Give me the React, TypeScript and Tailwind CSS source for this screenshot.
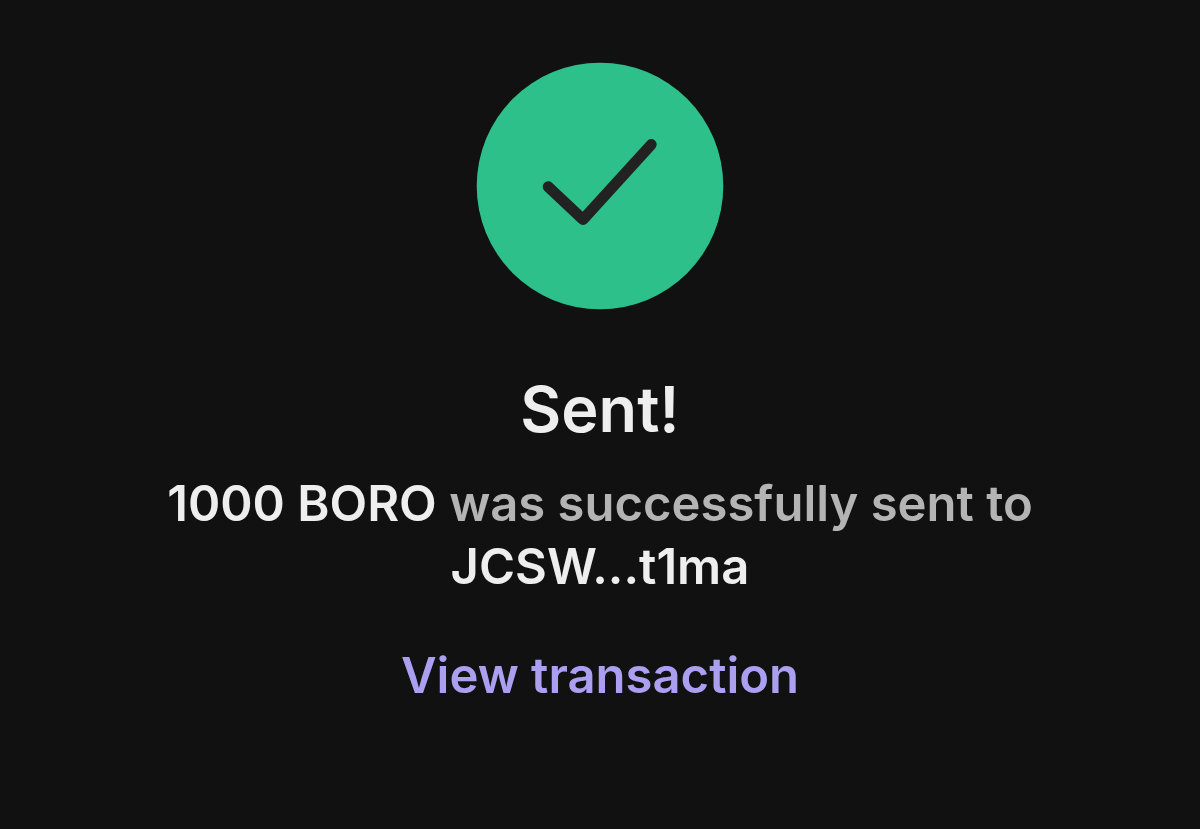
import React from 'react';

const transfer = {
  amount: '1000 BORO',
  recipient: 'JCSW...t1ma',
};

const SuccessIcon: React.FC = () => (
  <svg viewBox="0 0 248 248" fill="none" className="h-[248px] w-[248px]" aria-hidden="true">
    <circle cx="124" cy="124" r="123.3" fill="#2ec08b" />
    <path
      d="M72.2 124.800L107 157.500L175.200 82.600"
      stroke="#222222"
      strokeWidth="11"
      strokeLinecap="round"
      strokeLinejoin="round"
    />
  </svg>
);

export default function App() {
  return (
    <main className="flex min-h-screen flex-col items-center bg-[#111111] px-40 pt-[62px] pb-24 text-center font-['Inter',sans-serif] font-semibold">
      <SuccessIcon />
      <h1 className="mt-16 text-[63px] leading-[70px] text-[#eeeeee]">Sent!</h1>
      <p className="mt-7 text-[49px] leading-[63px] text-[#b4b4b4]">
        <span className="text-[#eeeeee]">{transfer.amount}</span> was successfully sent to{' '}
        <span className="text-[#eeeeee]">{transfer.recipient}</span>
      </p>
      <a href="#transaction" className="mt-12 text-[49px] leading-[60px] text-[#ab9ff2]">
        View transaction
      </a>
    </main>
  );
}
